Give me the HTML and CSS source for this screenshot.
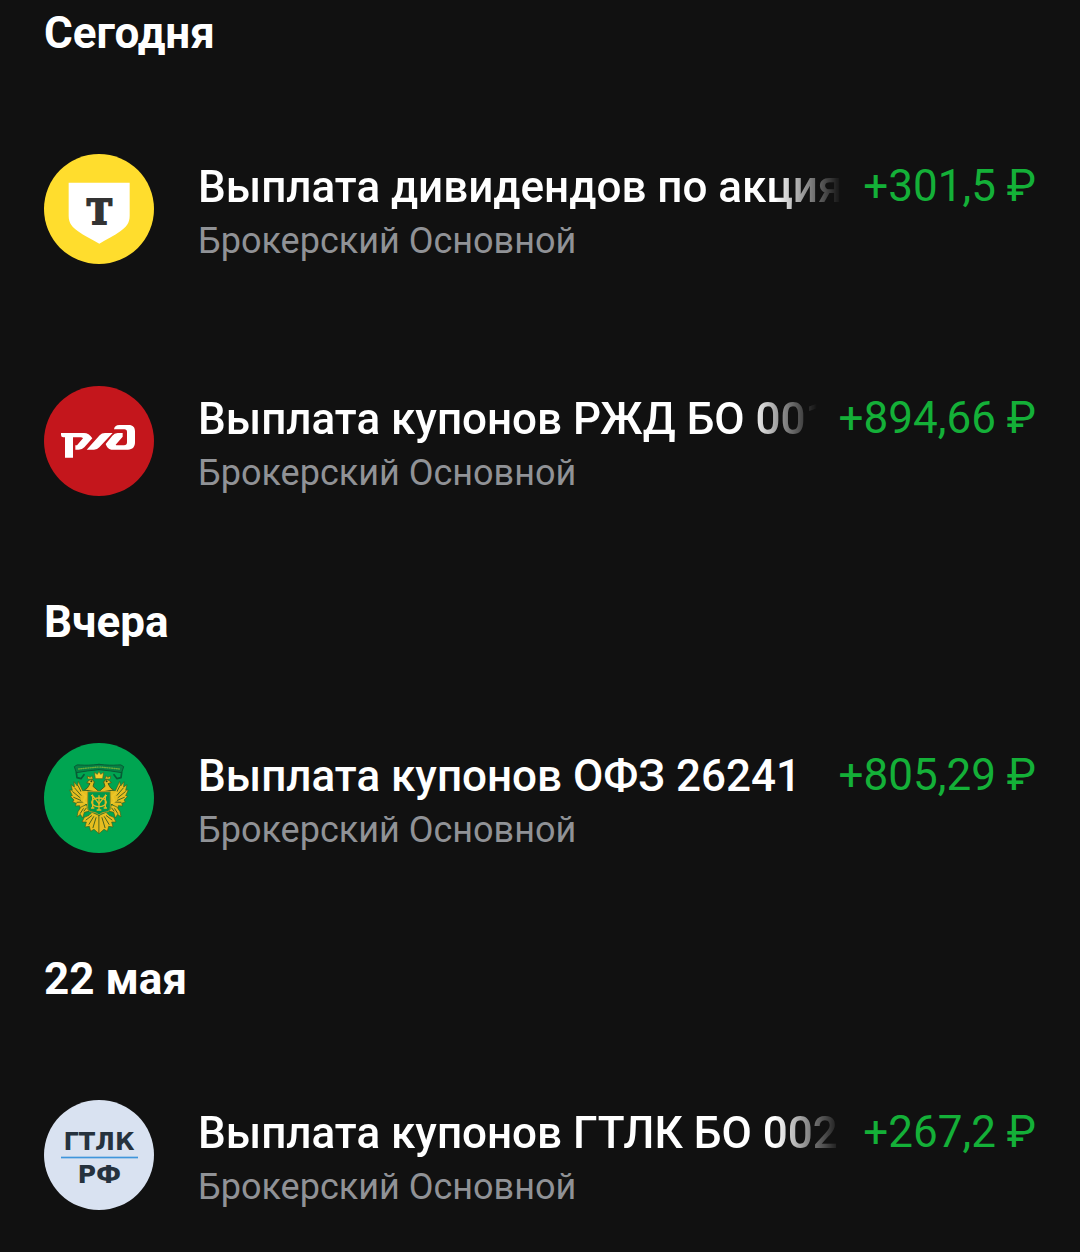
FILE: index.html
```html
<!DOCTYPE html>
<html lang="ru">
<head>
    <meta charset="UTF-8">
    <title>Операции</title>
    <link rel="stylesheet" href="styles.css">
</head>
<body>
    <main class="feed">
        <section class="day">
            <h2 class="day-title">Сегодня</h2>
            <div class="row">
                <svg class="logo" viewBox="30 30 330 330" aria-hidden="true">
                    <circle cx="195" cy="195" r="165" fill="#ffdd2d"/>
                    <path d="M104 116H287V215C287 238 276 249 260 261C240 276 218 286 196 299C173 286 151 276 131 261C115 249 104 238 104 215Z" fill="#fff"/>
                    <text x="196" y="239" text-anchor="middle" font-family="DejaVu Serif" font-weight="bold" font-size="100" fill="#333" stroke="#333" stroke-width="6">T</text>
                </svg>
                <div class="info">
                    <div class="name name-fade">Выплата дивидендов по акциям</div>
                    <div class="account">Брокерский Основной</div>
                </div>
                <div class="amount">+301,5 ₽</div>
            </div>
            <div class="row">
                <svg class="logo" viewBox="30 30 330 330" aria-hidden="true">
                    <circle cx="195" cy="195" r="165" fill="#c4161c"/>
                    <g fill="#fff">
                        <path d="M81 171H150C160 171 168 176 175 187L151 214Q145 221 134 221H124V208H129L147 187Q145 184 140 184H117V245H93V184H88Q81 184 81 177Z"/>
                        <path d="M158 221L197 178Q203 171 213 171H236L196 214Q190 221 180 221Z"/>
                        <path d="M240 160C241 152 246 147 256 147H284C297 147 303 154 303 166V199C303 213 296 221 282 221H232C223 220 218 213 215 204L235 179Q241 171 251 171H266V182L245 206Q246 208 250 208H270Q279 208 279 199V168Q279 160 271 160Z"/>
                    </g>
                </svg>
                <div class="info">
                    <div class="name name-fade">Выплата купонов РЖД БО 001Р</div>
                    <div class="account">Брокерский Основной</div>
                </div>
                <div class="amount">+894,66 ₽</div>
            </div>
        </section>
        <section class="day">
            <h2 class="day-title">Вчера</h2>
            <div class="row">
                <svg class="logo" viewBox="30 30 330 330" aria-hidden="true">
                    <defs>
                        <g id="eagle-half" stroke-linecap="round" stroke-linejoin="round">
                            <!-- ribbon -->
                            <path d="M195 94Q160 98 140 96Q128 93 121 101L127 119Q160 113 195 110" fill="#078044" stroke="#075b35" stroke-width="3"/>
                            <path d="M127 119L129 134L141 137L150 125" fill="none" stroke="#075b35" stroke-width="5"/>
                            <path d="M134 108Q160 105 195 102" fill="none" stroke="#6aad37" stroke-width="4" stroke-dasharray="3 4"/>
                            <!-- wing -->
                            <path d="M163 172L146 173L133 145L130 159L120 146L121 162L111 155L115 172L107 171L115 188L109 190L120 201L116 207L127 211L124 219L137 218L139 228L160 210Z" fill="#e6be20" stroke="#3f5f1c" stroke-width="2"/>
                            <path d="M132 158L144 181M122 165L141 187M116 176L138 194M119 193L140 202M129 208L148 207" fill="none" stroke="#4c641d" stroke-width="3"/>
                            <path d="M142 178L155 190L148 205L157 210" fill="none" stroke="#ecc629" stroke-width="6"/>
                            <!-- head -->
                            <path d="M193 174L177 160L181 147Q174 134 165 142L158 149L168 152L160 165L151 171L194 178Z" fill="#e3bc20" stroke="#45611c" stroke-width="3"/>
                            <circle cx="172" cy="145" r="3" fill="#2c4c19"/>
                            <path d="M161 137L160 129L169 133L174 128L177 137" fill="#dcb51f" stroke="#45611c" stroke-width="2"/>
                            <!-- claw -->
                            <path d="M157 215L141 222L132 236L129 252L139 244L146 255L151 238L163 235Z" fill="#e6be20" stroke="#3f5f1c" stroke-width="2"/>
                            <path d="M148 227L139 241M157 225L150 234" stroke="#4c641d" stroke-width="3"/>
                            <!-- tail -->
                            <path d="M190 245L174 238L165 247L151 253L144 267L157 267L153 282L166 280L170 295L180 289L195 302V250Z" fill="#e6be20" stroke="#3f5f1c" stroke-width="2"/>
                            <path d="M186 254L177 284M179 251L165 274M173 248L156 261" fill="none" stroke="#4c641d" stroke-width="3"/>
                        </g>
                    </defs>
                    <circle cx="195" cy="195" r="165" fill="#00a551"/>
                    <use href="#eagle-half"/>
                    <use href="#eagle-half" transform="translate(390 0) scale(-1 1)"/>
                    <path d="M184 137L181 118L190 124L195 115L200 124L209 118L206 137Z" fill="#f2ce2e" stroke="#45611c" stroke-width="2"/>
                    <path d="M161 176H229V224Q229 236 215 237Q202 238 195 246Q188 238 175 237Q161 236 161 224Z" fill="#00984b" stroke="#b59a20" stroke-width="3"/>
                    <!-- monogram -->
                    <g fill="none" stroke="#dfb923" stroke-width="4">
                        <path d="M176 225V188L195 212L214 188V225M171 225H181M209 225H219M171 188H177M213 188H219"/>
                        <path d="M195 187V231M188 231H202"/>
                        <ellipse cx="195" cy="208" rx="22" ry="13"/>
                    </g>
                </svg>
                <div class="info">
                    <div class="name">Выплата купонов ОФЗ 26241</div>
                    <div class="account">Брокерский Основной</div>
                </div>
                <div class="amount">+805,29 ₽</div>
            </div>
        </section>
        <section class="day">
            <h2 class="day-title">22 мая</h2>
            <div class="row">
                <svg class="logo" viewBox="30 30 330 330" aria-hidden="true">
                    <circle cx="195" cy="195" r="165" fill="#d9e2f1"/>
                    <text x="195" y="181" text-anchor="middle" font-family="DejaVu Sans" font-weight="bold" font-size="72" fill="#26323e">ГТЛК</text>
                    <rect x="81" y="200" width="231" height="5" fill="#3f96dc"/>
                    <text x="196" y="279" text-anchor="middle" font-family="DejaVu Sans" font-weight="bold" font-size="76" fill="#26323e">РФ</text>
                </svg>
                <div class="info">
                    <div class="name name-fade">Выплата купонов ГТЛК БО 002Р</div>
                    <div class="account">Брокерский Основной</div>
                </div>
                <div class="amount">+267,2 ₽</div>
            </div>
        </section>
    </main>
</body>
</html>
```
FILE: styles.css
```css
* {
    box-sizing: border-box;
}
body {
    margin: 0;
    background: #111;
    color: #fff;
    font-family: Roboto, sans-serif;
}
.feed {
    padding: 0 44px;
}
.day + .day {
    padding-top: 32px;
}
.day-title {
    margin: 0;
    padding: 7px 0 34px;
    font-size: 44px;
    line-height: 52px;
    font-weight: 700;
}
.row {
    display: flex;
    padding: 61px 0;
}
.day:last-child .row:last-child {
    padding-bottom: 42px;
}
.logo {
    width: 110px;
    height: 110px;
    flex: none;
    margin-right: 44px;
}
.info {
    flex: 1;
    min-width: 0;
    padding-top: 7px;
}
.name {
    font-size: 44px;
    line-height: 52px;
    font-weight: 500;
    white-space: nowrap;
    overflow: hidden;
}
.name-fade {
    -webkit-mask-image: linear-gradient(to left, transparent, #000 66px);
    mask-image: linear-gradient(to left, transparent, #000 66px);
}
.account {
    margin-top: 6px;
    font-size: 36px;
    line-height: 44px;
    color: #909296;
}
.amount {
    flex: none;
    margin-left: 22px;
    padding-top: 6px;
    font-size: 44px;
    line-height: 52px;
    color: #14b038;
}
```
